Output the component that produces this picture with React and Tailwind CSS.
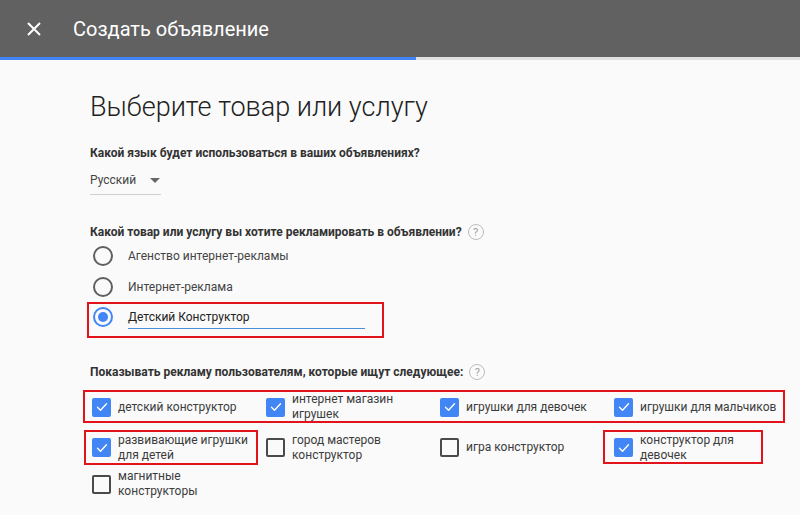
import React from 'react';

const font = { fontFamily: 'Roboto, "Noto Sans", Arial, sans-serif' };

function Help() {
  return (
    <span className="ml-[6px] inline-flex h-[16px] w-[16px] items-center justify-center rounded-full border border-[#bdbdbd] text-[11px] font-normal leading-none text-[#9e9e9e]">
      ?
    </span>
  );
}

function Radio({ checked }) {
  return (
    <span
      className={`flex h-[20px] w-[20px] shrink-0 items-center justify-center rounded-full border-2 ${
        checked ? 'border-[#4285f4]' : 'border-[#5f5f5f]'
      }`}
    >
      {checked && <span className="h-[10px] w-[10px] rounded-full bg-[#4285f4]" />}
    </span>
  );
}

function Checkbox({ checked }) {
  if (checked) {
    return (
      <span className="flex h-[19px] w-[19px] shrink-0 items-center justify-center rounded-[2px] bg-[#4285f4]">
        <svg width="12" height="10" viewBox="0 0 12 10" fill="none">
          <path d="M1.5 5.2l3 3L10.5 1.8" stroke="white" strokeWidth="1.4" strokeLinecap="round" strokeLinejoin="round" />
        </svg>
      </span>
    );
  }
  return <span className="h-[19px] w-[19px] shrink-0 rounded-[2px] border-2 border-[#4a4a4a]" />;
}

function Item({ checked, children }) {
  return (
    <div className="flex items-center gap-[7px]">
      <Checkbox checked={checked} />
      <span className="text-[12px] leading-[15px] text-[#3c3c3c]">{children}</span>
    </div>
  );
}

export default function App() {
  return (
    <div className="h-[515px] w-[800px] overflow-hidden bg-[#fafafa]" style={font}>
      {/* Header */}
      <div className="flex h-[57px] items-center bg-[#616161]">
        <svg className="ml-[27px]" width="14" height="14" viewBox="0 0 14 14">
          <path d="M1 1l12 12M13 1L1 13" stroke="white" strokeWidth="2" />
        </svg>
        <span className="ml-[32px] text-[20px] text-white">Создать объявление</span>
      </div>
      <div className="flex h-[3px] bg-[#e0e0e0]">
        <div className="h-full w-[416px] bg-[#4285f4]" />
      </div>

      <div className="pl-[90px]">
        <h1 className="mt-[30px] text-[27px] font-light leading-[34px] text-[#212121]">
          Выберите товар или услугу
        </h1>

        <div className="mt-[20px] text-[12px] font-bold leading-[18px] text-[#333]">
          Какой язык будет использоваться в ваших объявлениях?
        </div>
        <div className="mt-[9px] flex w-[71px] items-center justify-between border-b border-[#d0d0d0] pb-[5px]">
          <span className="text-[12px] leading-[18px] text-[#444]">Русский</span>
          <svg width="10" height="5" viewBox="0 0 10 5" className="mr-[1px]">
            <path d="M0 0h10L5 5z" fill="#666" />
          </svg>
        </div>

        <div className="mt-[29px] flex items-center text-[12px] font-bold leading-[16px] text-[#333]">
          Какой товар или услугу вы хотите рекламировать в объявлении?
          <Help />
        </div>
        <div className="flex h-[31px] items-center pl-[3px]">
          <Radio />
          <span className="ml-[15px] text-[12px] text-[#444]">Агенство интернет-рекламы</span>
        </div>
        <div className="flex h-[31px] items-center pl-[3px]">
          <Radio />
          <span className="ml-[15px] text-[12px] text-[#444]">Интернет-реклама</span>
        </div>
        <div className="-ml-[3px] flex h-[36px] w-[297px] items-start border-2 border-[#e3131b] pl-[4px] pt-[3px]">
          <Radio checked />
          <div className="ml-[15px] mt-[1px] w-[237px] border-b border-[#4a90d9] pb-[2px] text-[12px] leading-[18px] text-[#222]">
            Детский Конструктор
          </div>
        </div>

        <div className="mt-[25px] flex items-center text-[12px] font-bold leading-[18px] text-[#333]">
          Показывать рекламу пользователям, которые ищут следующее:
          <Help />
        </div>

        <div className="-ml-[7px] mt-[9px] grid h-[33px] w-[702px] grid-cols-[174px_174px_174px_1fr] items-center border-2 border-[#e3131b] pl-[7px]">
          <Item checked>детский конструктор</Item>
          <Item checked>
            интернет магазин
            <br />
            игрушек
          </Item>
          <Item checked>игрушки для девочек</Item>
          <Item checked>игрушки для мальчиков</Item>
        </div>

        <div className="ml-[2px] mt-[7px] grid h-[35px] grid-cols-[174px_174px_174px_174px]">
          <div className="relative flex h-full items-center">
            <Item checked>
              развивающие игрушки
              <br />
              для детей
            </Item>
            <div className="absolute -left-[8px] top-0 h-[35px] w-[174px] border-2 border-[#e3131b]" />
          </div>
          <div className="flex h-full items-center">
            <Item>
              город мастеров
              <br />
              конструктор
            </Item>
          </div>
          <div className="flex h-full items-center">
            <Item>игра конструктор</Item>
          </div>
          <div className="relative flex h-full items-center">
            <Item checked>
              конструктор для
              <br />
              девочек
            </Item>
            <div className="absolute -left-[11px] top-0 h-[34px] w-[160px] border-2 border-[#e3131b]" />
          </div>
        </div>

        <div className="ml-[2px] mt-[4px] flex h-[30px] items-center">
          <Item>
            магнитные
            <br />
            конструкторы
          </Item>
        </div>
      </div>
    </div>
  );
}
